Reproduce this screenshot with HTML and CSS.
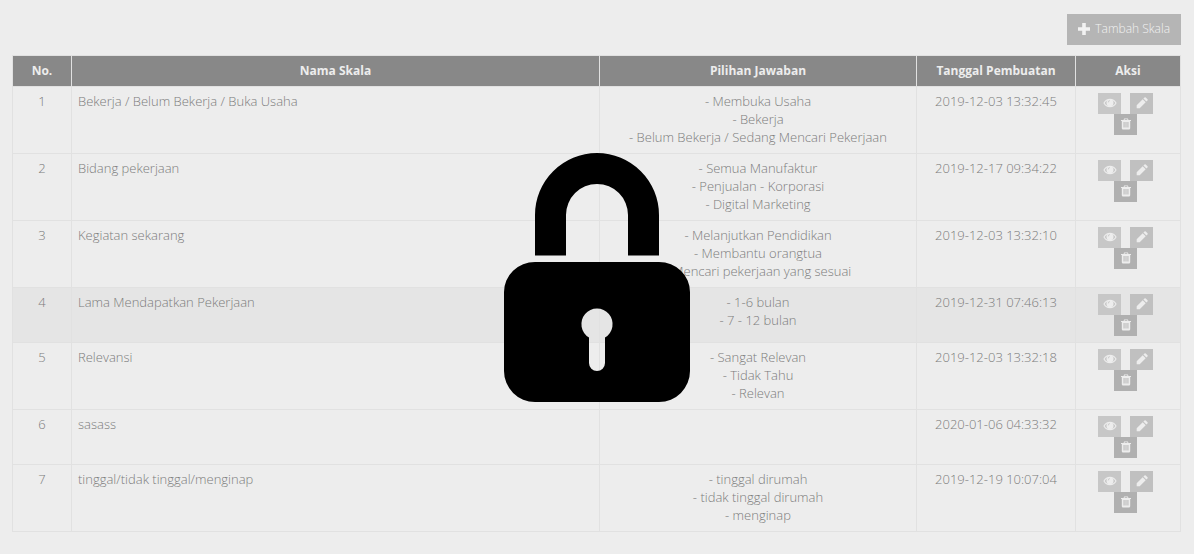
FILE: index.html
```html
<!DOCTYPE html>
<html lang="id">
<head>
<meta charset="utf-8">
<meta name="viewport" content="width=device-width, initial-scale=1">
<title>Daftar Skala</title>
<link rel="stylesheet" href="styles.css">
</head>
<body>
<svg class="sprite" aria-hidden="true">
  <symbol id="plus" viewBox="0 0 12 12"><path d="M4.2 0h3.6v4.2H12v3.6H7.8V12H4.2V7.8H0V4.2h4.2z"/></symbol>
  <symbol id="eye" viewBox="0 0 14 12"><path fill="none" stroke="currentColor" stroke-width="1.1" d="M1 6C2.300 3.700 4.500 2.400 7 2.400S11.700 3.700 13 6C11.700 8.400 9.500 9.600 7 9.600S2.300 8.400 1 6z"/><path fill-rule="evenodd" d="M7 2.200A3.500 3.500 0 1 1 7 9.200 3.500 3.500 0 0 1 7 2.200zM7 3.200A2.300 2.300 0 0 0 4.700 5.500h.7A1.600 1.600 0 0 1 7 3.900z"/></symbol>
  <symbol id="pencil" viewBox="0 0 12 12"><path d="M.7 11.300V8.300L6.700 2.300 9.700 5.300 3.700 11.300zM7.400 1.600 8.500.5Q9.100 0 9.700.5L11.500 2.300Q12 2.900 11.500 3.500L10.400 4.600z"/></symbol>
  <symbol id="trash" viewBox="0 0 12 12"><path fill-rule="evenodd" d="M4.200.5h3.600L8.500 2H11v1h-.8v7.300q0 1.200-1.200 1.200H3q-1.200 0-1.200-1.200V3H1V2h2.500zM4.800 1.200 4.500 2h3L7.200 1.200zM3.600 4v5.500h.9V4zM5.550 4v5.500h.9V4zM7.500 4v5.500h.9V4z"/></symbol>
</svg>

<main class="page">
  <div class="toolbar">
    <button class="add" type="button"><svg class="add-icon" aria-hidden="true"><use href="#plus"/></svg>Tambah Skala</button>
  </div>

  <table class="scales">
    <colgroup><col class="col-no"><col><col class="col-answers"><col class="col-date"><col class="col-actions"></colgroup>
    <thead>
      <tr><th>No.</th><th>Nama Skala</th><th>Pilihan Jawaban</th><th>Tanggal Pembuatan</th><th>Aksi</th></tr>
    </thead>
    <tbody>
      <tr>
        <td>1</td><td class="name">Bekerja / Belum Bekerja / Buka Usaha</td>
        <td>- Membuka Usaha<br>- Bekerja<br>- Belum Bekerja / Sedang Mencari Pekerjaan</td>
        <td>2019-12-03 13:32:45</td>
        <td class="tools"><div class="actions"><button type="button" class="act view" aria-label="Lihat"><svg><use href="#eye"/></svg></button><button type="button" class="act edit" aria-label="Ubah"><svg><use href="#pencil"/></svg></button><button type="button" class="act remove" aria-label="Hapus"><svg><use href="#trash"/></svg></button></div></td>
      </tr>
      <tr>
        <td>2</td><td class="name">Bidang pekerjaan</td>
        <td>- Semua Manufaktur<br>- Penjualan - Korporasi<br>- Digital Marketing</td>
        <td>2019-12-17 09:34:22</td>
        <td class="tools"><div class="actions"><button type="button" class="act view" aria-label="Lihat"><svg><use href="#eye"/></svg></button><button type="button" class="act edit" aria-label="Ubah"><svg><use href="#pencil"/></svg></button><button type="button" class="act remove" aria-label="Hapus"><svg><use href="#trash"/></svg></button></div></td>
      </tr>
      <tr>
        <td>3</td><td class="name">Kegiatan sekarang</td>
        <td>- Melanjutkan Pendidikan<br>- Membantu orangtua<br>- Mencari pekerjaan yang sesuai</td>
        <td>2019-12-03 13:32:10</td>
        <td class="tools"><div class="actions"><button type="button" class="act view" aria-label="Lihat"><svg><use href="#eye"/></svg></button><button type="button" class="act edit" aria-label="Ubah"><svg><use href="#pencil"/></svg></button><button type="button" class="act remove" aria-label="Hapus"><svg><use href="#trash"/></svg></button></div></td>
      </tr>
      <tr class="active">
        <td>4</td><td class="name">Lama Mendapatkan Pekerjaan</td>
        <td>- 1-6 bulan<br>- 7 - 12 bulan</td>
        <td>2019-12-31 07:46:13</td>
        <td class="tools"><div class="actions"><button type="button" class="act view" aria-label="Lihat"><svg><use href="#eye"/></svg></button><button type="button" class="act edit" aria-label="Ubah"><svg><use href="#pencil"/></svg></button><button type="button" class="act remove" aria-label="Hapus"><svg><use href="#trash"/></svg></button></div></td>
      </tr>
      <tr>
        <td>5</td><td class="name">Relevansi</td>
        <td>- Sangat Relevan<br>- Tidak Tahu<br>- Relevan</td>
        <td>2019-12-03 13:32:18</td>
        <td class="tools"><div class="actions"><button type="button" class="act view" aria-label="Lihat"><svg><use href="#eye"/></svg></button><button type="button" class="act edit" aria-label="Ubah"><svg><use href="#pencil"/></svg></button><button type="button" class="act remove" aria-label="Hapus"><svg><use href="#trash"/></svg></button></div></td>
      </tr>
      <tr>
        <td>6</td><td class="name">sasass</td>
        <td></td>
        <td>2020-01-06 04:33:32</td>
        <td class="tools"><div class="actions"><button type="button" class="act view" aria-label="Lihat"><svg><use href="#eye"/></svg></button><button type="button" class="act edit" aria-label="Ubah"><svg><use href="#pencil"/></svg></button><button type="button" class="act remove" aria-label="Hapus"><svg><use href="#trash"/></svg></button></div></td>
      </tr>
      <tr>
        <td>7</td><td class="name">tinggal/tidak tinggal/menginap</td>
        <td>- tinggal dirumah<br>- tidak tinggal dirumah<br>- menginap</td>
        <td>2019-12-19 10:07:04</td>
        <td class="tools"><div class="actions"><button type="button" class="act view" aria-label="Lihat"><svg><use href="#eye"/></svg></button><button type="button" class="act edit" aria-label="Ubah"><svg><use href="#pencil"/></svg></button><button type="button" class="act remove" aria-label="Hapus"><svg><use href="#trash"/></svg></button></div></td>
      </tr>
    </tbody>
  </table>
</main>

<div class="overlay">
  <svg class="lock" viewBox="0 0 186 249" role="img" aria-label="Terkunci">
    <path d="M31 102.500V62a62 62 0 0 1 124 0v40.500H124V62a31 31 0 0 0-62 0v40.500z"/>
    <path fill-rule="evenodd" d="M31 109H155A31 30 0 0 1 186 139V218A31 31 0 0 1 155 249H31A31 31 0 0 1 0 218V139A31 30 0 0 1 31 109zM85 184.500V210a8 8 0 0 0 16 0V184.500A15.600 15.600 0 1 0 85 184.500z"/>
  </svg>
</div>
</body>
</html>
```

FILE: styles.css
```css
* { box-sizing: border-box; }

body {
  margin: 0;
  background: #ededed;
  color: #7c7c7c;
  font: 300 13px/18px "Open Sans", "Noto Sans", sans-serif;
}

.sprite { display: none; }

.page { padding: 14px 13px 22px 12px; }

.toolbar {
  display: flex;
  justify-content: flex-end;
  margin-bottom: 10px;
}

.add {
  display: flex;
  align-items: center;
  gap: 5px;
  height: 31px;
  padding: 0 11px 2px;
  border: 0;
  background: #b5b5b5;
  color: #f2f2f2;
  font: 300 12px/18px "Open Sans", "Noto Sans", sans-serif;
}

.add-icon { width: 12px; height: 12px; fill: currentColor; }

.scales {
  width: 100%;
  table-layout: fixed;
  border-collapse: collapse;
}

.col-no { width: 59px; }
.col-answers { width: 317px; }
.col-date { width: 159px; }
.col-actions { width: 105px; }

.scales th,
.scales td {
  padding: 5px 6px 7px;
  border: 1px solid #e1e1e1;
  text-align: center;
  vertical-align: top;
}

.scales th {
  padding: 6px;
  background: #888;
  color: #ededed;
  font-size: 12px;
  font-weight: 700;
}

.scales .name { text-align: left; }
.scales .tools { padding: 6px; }
.active { background: #e5e5e5; }

.actions {
  display: flex;
  flex-wrap: wrap;
  justify-content: center;
  column-gap: 9px;
  padding: 0 10px 0 5px;
}

.act {
  display: grid;
  place-items: center;
  width: 23px;
  height: 21px;
  padding: 0 0 2px;
  border: 0;
  color: #ededed;
}

.act svg { width: 12px; height: 12px; fill: currentColor; }
.act.view svg { width: 14px; }
.view { background: #c7c7c7; }
.edit { background: #c0c0c0; }
.remove { background: #b0b0b0; }

.overlay {
  position: fixed;
  inset: 0;
  display: grid;
  place-items: center;
  pointer-events: none;
}

.lock { width: 186px; height: 249px; }
```
